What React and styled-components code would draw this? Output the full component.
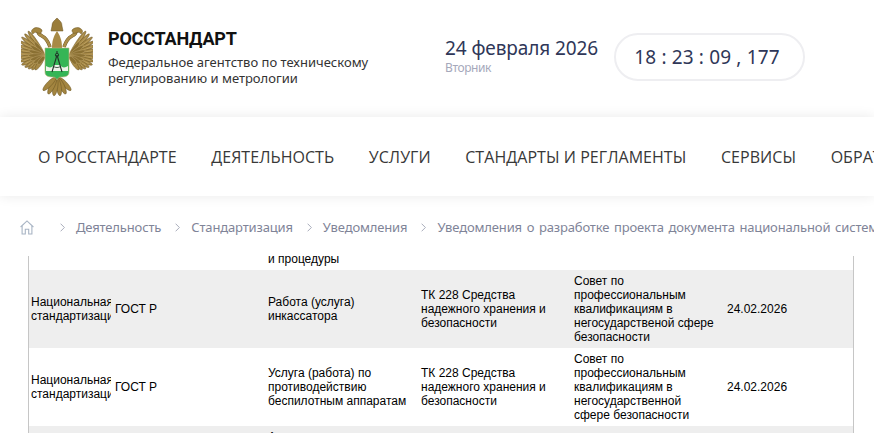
import React from 'react';
import styled, { createGlobalStyle } from 'styled-components';

const Global = createGlobalStyle`
  html, body {
    margin: 0;
    height: 433px;
    overflow: hidden;
    background: #fff;
  }
`;

const Page = styled.div`
  width: 874px;
  height: 433px;
  overflow: hidden;
  font-family: 'Noto Sans', sans-serif;
`;

const Header = styled.header`
  display: flex;
  align-items: flex-start;
  height: 117px;
  padding: 17px 0 0 21px;
  box-sizing: border-box;
`;

const Brand = styled.div`
  display: flex;
  width: 424px;
`;

const BrandText = styled.div`
  margin: 10px 0 0 15px;
`;

const BrandName = styled.div`
  font-family: 'Roboto', sans-serif;
  font-size: 18px;
  line-height: 24px;
  font-weight: 700;
  color: #111;
  letter-spacing: -0.2px;
`;

const BrandSub = styled.div`
  margin-top: 3px;
  font-size: 13px;
  line-height: 16px;
  color: #333;
  white-space: nowrap;
`;

const DateBox = styled.div`
  width: 169px;
  margin-top: 18px;
`;

const DateMain = styled.div`
  font-size: 19px;
  line-height: 26px;
  color: #2f3758;
  letter-spacing: -0.1px;
  white-space: nowrap;
`;

const DateDay = styled.div`
  font-size: 12px;
  line-height: 14px;
  color: #a5a8bb;
  letter-spacing: -0.4px;
`;

const Clock = styled.div`
  width: 191px;
  height: 48px;
  margin-top: 16px;
  padding-right: 5px;
  box-sizing: border-box;
  border: 2px solid #eeeef1;
  border-radius: 24px;
  display: flex;
  align-items: center;
  justify-content: center;
  font-size: 19px;
  color: #2f3758;
  letter-spacing: 0.15px;
  white-space: pre;
`;

const Nav = styled.nav`
  display: flex;
  align-items: center;
  gap: 34.6px;
  height: 79px;
  padding-left: 38px;
  background: #fff;
  box-shadow: 0 0 12px rgba(0, 0, 0, 0.09);
  white-space: nowrap;
`;

const NavItem = styled.span`
  font-family: 'Open Sans', sans-serif;
  font-size: 16px;
  letter-spacing: 0.05px;
  color: #383838;
  flex: none;
`;

const Crumbs = styled.div`
  display: flex;
  align-items: center;
  height: 24px;
  margin-top: 19px;
  padding-left: 20px;
  white-space: nowrap;
`;

const Crumb = styled.span`
  font-size: 13px;
  color: #7f8498;
  letter-spacing: -0.15px;
  word-spacing: 1.5px;
  flex: none;
`;

const Chevron = styled.svg`
  flex: none;
  width: 5px;
  height: 9px;
  margin: 1px 11px 0 ${({ $first }) => ($first ? '26px' : '14px')};
  fill: none;
  stroke: #a9adbb;
  stroke-width: 1;
`;

const Frame = styled.div`
  margin: 17px 0 0 28px;
  width: 826px;
  height: 177px;
  box-sizing: border-box;
  border-left: 1px solid #c6c6c6;
  border-right: 1px solid #c6c6c6;
  font-family: 'Liberation Sans', Arial, sans-serif;
  font-size: 12px;
  line-height: 14px;
  color: #000;
  overflow: hidden;
`;

const Row = styled.div`
  display: grid;
  grid-template-columns: 86px 153px 153px 153px 153px 1fr;
  grid-auto-rows: ${({ $h }) => $h}px;
  height: ${({ $h }) => $h}px;
  background: ${({ $alt }) => ($alt ? '#eeeeee' : '#fff')};
  align-items: ${({ $align }) => $align || 'center'};
  overflow: hidden;
`;

const Cell = styled.div`
  padding-right: 10px;
`;

const TypeCell = styled.div`
  margin-left: 2px;
  width: 80px;
  overflow: hidden;
  white-space: nowrap;
`;

const TailEnd = styled.div`
  padding-bottom: 4px;
`;

const Stub = styled.div`
  padding-top: 4px;
`;

const LENGTHS = [27, 27, 27, 26, 26, 25, 25, 24, 23, 22, 20, 18, 16, 14];

const Emblem = () => {
  // перья крыла расходятся веером от плеча
  const feathers = LENGTHS.map((len, i) => (
    <g key={i} transform={`rotate(${-124 - i * 8.5} 45 56)`}>
      <ellipse cx={48 + len / 2} cy="56" rx={len / 2} ry="2" fill="#a68845" stroke="#6a5524" strokeWidth="0.45" />
      <line x1="58" y1="56" x2={44 + len} y2="56" stroke="#d3bc84" strokeWidth="0.4" />
    </g>
  ));
  const inner = LENGTHS.filter((_, i) => i % 2 === 0).map((len, i) => (
    <g key={i} transform={`rotate(${-127 - i * 17} 45 56)`}>
      <ellipse cx={46 + len * 0.3} cy="56" rx={len * 0.32} ry="2" fill="#8a6f33" stroke="#c7ae72" strokeWidth="0.4" />
    </g>
  ));
  const tail = [-44, -26, -9, 9, 26, 44].map((a) => (
    <g key={a} transform={`rotate(${a} 57 76)`}>
      <ellipse cx="57" cy="87" rx="2.5" ry="9" fill="#a3853f" stroke="#6a5524" strokeWidth="0.5" />
    </g>
  ));
  const side = (
    <g>
      {feathers}
      {inner}
      <path d="M50 47 C48 41 46 38 42 36 C40 35 38 33 38 31" stroke="#6a5524" strokeWidth="3.6" fill="none" />
      <path d="M50 47 C48 41 46 38 42 36 C40 35 38 33 38 31" stroke="#ab8d48" strokeWidth="2.6" fill="none" />
      <path d="M42 30 C39 27 35 27 33 29 C31 30 31 33 33 34 C34 32 36 32 38 33 C40 34 42 33 42 30 Z" fill="#a3853f" stroke="#6a5524" strokeWidth="0.5" />
    </g>
  );
  return (
    <svg width="72" height="80" viewBox="21 17 72 80" style={{ flex: 'none' }}>
      <defs>
        <filter id="soft" x="-5%" y="-5%" width="110%" height="110%">
          <feGaussianBlur stdDeviation="0.35" />
        </filter>
      </defs>
      <g filter="url(#soft)">
        {tail}
        {side}
        <g transform="translate(114 0) scale(-1 1)">{side}</g>
        <path d="M52 26 C52 22 54 21 57 18 C60 21 62 22 62 26 L63 31 H51 Z" fill="#9a7d3b" stroke="#6a5524" strokeWidth="0.5" />
        <path d="M57 31 C53 37 52 42 52 48 H62 C62 42 61 37 57 31 Z" fill="#a88a45" />
        <path d="M45 48 H69 V72 C69 76 66 77 61 77 C59 77 58 78 57 80 C56 78 55 77 53 77 C48 77 45 76 45 72 Z" fill="#35b556" stroke="#c4b07a" strokeWidth="0.6" />
        <path d="M46 66 C49 68 52 68 54 65 H60 C62 68 65 68 68 66 V71 H46 Z" fill="#eef3ea" />
        <path d="M57 51 V54 M57 55 L52 72 M57 55 L62 72" stroke="#23352a" strokeWidth="1.1" fill="none" />
        <circle cx="57" cy="55" r="1.7" fill="none" stroke="#23352a" strokeWidth="0.9" />
        <path d="M53 66 C55 68 59 68 61 66" stroke="#23352a" strokeWidth="0.8" fill="none" />
      </g>
    </svg>
  );
};

const HomeIcon = () => (
  <svg width="14" height="15" viewBox="0 0 14 15" fill="none" stroke="#a8b4c4" strokeWidth="1.1" style={{ flex: 'none' }}>
    <path d="M0.6 7 L7 0.9 L13.4 7" />
    <path d="M2.1 6 V14 H5.3 V9.3 H8.7 V14 H11.9 V6" />
  </svg>
);

const Sep = ({ first }) => (
  <Chevron $first={first} viewBox="0 0 5 9">
    <path d="M0.6 0.7 L4.4 4.5 L0.6 8.3" />
  </Chevron>
);

const NAV = ['О РОССТАНДАРТЕ', 'ДЕЯТЕЛЬНОСТЬ', 'УСЛУГИ', 'СТАНДАРТЫ И РЕГЛАМЕНТЫ', 'СЕРВИСЫ', 'ОБРАТНАЯ СВЯЗЬ'];

const CRUMBS = [
  'Деятельность',
  'Стандартизация',
  'Уведомления',
  'Уведомления о разработке проекта документа национальной системы стандартизации',
];

// опечатка «негосударственой» есть в исходной таблице
const ROWS = [
  {
    alt: true,
    work: 'Работа (услуга) инкассатора',
    council: 'Совет по профессиональным квалификациям в негосударственой сфере безопасности',
  },
  {
    alt: false,
    work: 'Услуга (работа) по противодействию беспилотным аппаратам',
    council: 'Совет по профессиональным квалификациям в негосударственной сфере безопасности',
  },
];

export default function App() {
  return (
    <Page>
      <Global />
      <Header>
        <Brand>
          <Emblem />
          <BrandText>
            <BrandName>РОССТАНДАРТ</BrandName>
            <BrandSub>
              Федеральное агентство по техническому
              <br />
              регулированию и метрологии
            </BrandSub>
          </BrandText>
        </Brand>
        <DateBox>
          <DateMain>24 февраля 2026</DateMain>
          <DateDay>Вторник</DateDay>
        </DateBox>
        <Clock>18 : 23 : 09 , 177</Clock>
      </Header>
      <Nav>
        {NAV.map((item) => (
          <NavItem key={item}>{item}</NavItem>
        ))}
      </Nav>
      <Crumbs>
        <HomeIcon />
        {CRUMBS.map((item, i) => (
          <React.Fragment key={item}>
            <Sep first={i === 0} />
            <Crumb>{item}</Crumb>
          </React.Fragment>
        ))}
      </Crumbs>
      <Frame>
        <Row $h={14} $align="end">
          <span />
          <span />
          <TailEnd>и процедуры</TailEnd>
        </Row>
        {ROWS.map((row) => (
          <Row key={row.work} $h={78} $alt={row.alt}>
            <TypeCell>
              Национальная
              <br />
              стандартизация
            </TypeCell>
            <Cell>ГОСТ Р</Cell>
            <Cell>{row.work}</Cell>
            <Cell>ТК 228 Средства надежного хранения и безопасности</Cell>
            <Cell>{row.council}</Cell>
            <Cell>24.02.2026</Cell>
          </Row>
        ))}
        <Row $h={7} $alt $align="start">
          <span />
          <span />
          <Stub>Аудит</Stub>
        </Row>
      </Frame>
    </Page>
  );
}
